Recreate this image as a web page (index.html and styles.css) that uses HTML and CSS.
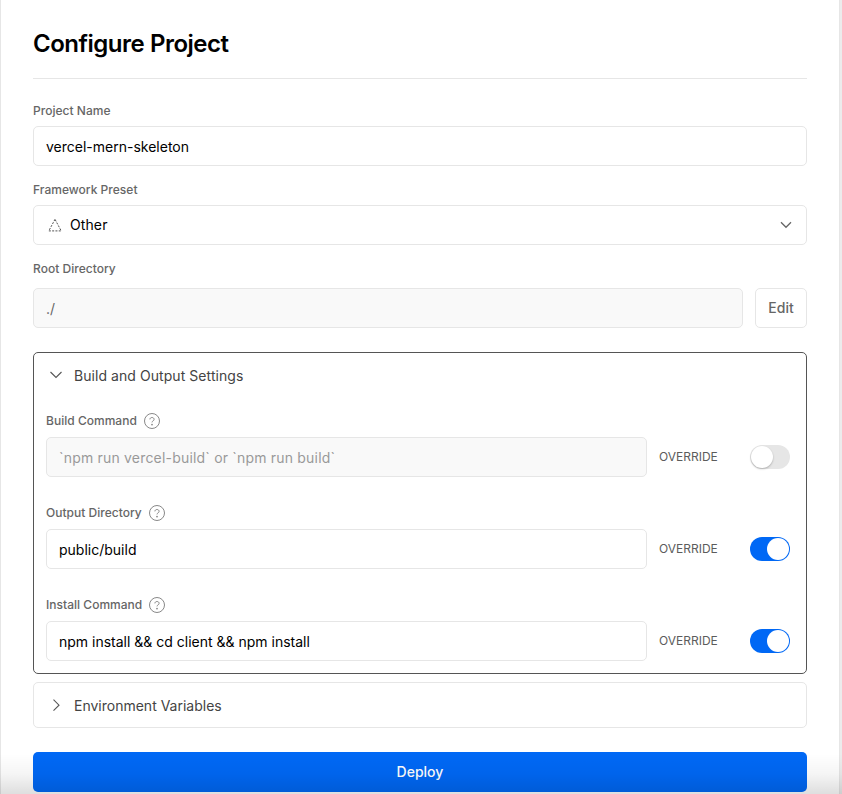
FILE: index.html
```html
<!DOCTYPE html>
<html lang="en">
<head>
<meta charset="utf-8">
<title>Configure Project</title>
<link rel="stylesheet" href="styles.css">
</head>
<body>
<main class="card">
  <h1 class="title">Configure Project</h1>
  <section class="field">
    <div class="label">Project Name</div>
    <div class="input">vercel-mern-skeleton</div>
  </section>
  <section class="field">
    <div class="label">Framework Preset</div>
    <div class="input select">
      <svg class="preset" width="14" height="14" viewBox="0 0 14 14"><path d="M7 1.300.8 12.900h12.400Z" fill="none" stroke="#555" stroke-width="1" stroke-dasharray="2 1.300"/></svg>
      <span class="select-text">Other</span>
      <svg class="caret" width="12" height="8" viewBox="0 0 12 8"><path d="m1 1.300 5 5 5-5" fill="none" stroke="#666" stroke-width="1.300"/></svg>
    </div>
  </section>
  <section class="field root">
    <div class="label">Root Directory</div>
    <div class="row">
      <div class="input disabled path">./</div>
      <button class="edit">Edit</button>
    </div>
  </section>
  <section class="panel open">
    <div class="panel-head">
      <svg width="14" height="14" viewBox="0 0 14 14"><path d="m1.500 4 5.500 5.500L12.500 4" fill="none" stroke="#555" stroke-width="1.100"/></svg>
      <span class="build-title">Build and Output Settings</span>
    </div>
    <div class="setting">
      <div class="label">Build Command <svg class="help" width="16" height="16" viewBox="0 0 16 16"><circle cx="8" cy="8" r="7.500"/><path d="M5.900 6.400C5.900 5.200 6.800 4.500 8 4.500s2.100.8 2.100 1.900c0 1.500-2.100 1.500-2.100 3"/><circle class="dot" cx="8" cy="11.600" r=".9"/></svg></div>
      <div class="row">
        <div class="input disabled hint">`npm run vercel-build` or `npm run build`</div>
        <span class="override">OVERRIDE</span>
        <span class="toggle"></span>
      </div>
    </div>
    <div class="setting">
      <div class="label">Output Directory <svg class="help" width="16" height="16" viewBox="0 0 16 16"><circle cx="8" cy="8" r="7.500"/><path d="M5.900 6.400C5.900 5.200 6.800 4.500 8 4.500s2.100.8 2.100 1.900c0 1.500-2.100 1.500-2.100 3"/><circle class="dot" cx="8" cy="11.600" r=".9"/></svg></div>
      <div class="row">
        <div class="input">public/build</div>
        <span class="override">OVERRIDE</span>
        <span class="toggle on"></span>
      </div>
    </div>
    <div class="setting">
      <div class="label">Install Command <svg class="help" width="16" height="16" viewBox="0 0 16 16"><circle cx="8" cy="8" r="7.500"/><path d="M5.900 6.400C5.900 5.200 6.800 4.500 8 4.500s2.100.8 2.100 1.900c0 1.500-2.100 1.500-2.100 3"/><circle class="dot" cx="8" cy="11.600" r=".9"/></svg></div>
      <div class="row">
        <div class="input">npm install &amp;&amp; cd client &amp;&amp; npm install</div>
        <span class="override">OVERRIDE</span>
        <span class="toggle on"></span>
      </div>
    </div>
  </section>
  <section class="panel">
    <div class="panel-head">
      <svg width="14" height="14" viewBox="0 0 14 14"><path d="m4.500 1.700 5.500 5.500-5.500 5.500" fill="none" stroke="#555" stroke-width="1.100"/></svg>
      <span>Environment Variables</span>
    </div>
  </section>
  <button class="deploy">Deploy</button>
</main>
<div class="fade"></div>
</body>
</html>
```
FILE: styles.css
```css
* { box-sizing: border-box; }
body {
  margin: 0;
  height: 794px;
  overflow: hidden;
  background: #ececec;
  font-family: Inter, "Liberation Sans", sans-serif;
  font-size: 14px;
  color: #000;
}
.card {
  width: 840px;
  height: 794px;
  padding: 0 32px;
  background: #fff;
  border: solid #e6e6e6;
  border-width: 0 1px;
}
.title {
  margin: 0 0 23px;
  height: 79px;
  padding-top: 28px;
  border-bottom: 1px solid #e6e6e6;
  font-size: 24px;
  line-height: 32px;
  font-weight: 600;
  letter-spacing: -0.48px;
}
.field { margin-bottom: 15px; }
.label {
  display: flex;
  align-items: center;
  height: 16px;
  margin-bottom: 8px;
  font-size: 12px;
  font-weight: 500;
  letter-spacing: 0.02px;
  color: #666;
}
.input {
  display: flex;
  align-items: center;
  height: 40px;
  padding: 0 12px;
  border: 1px solid #e6e6e6;
  border-radius: 5px;
  background: #fff;
  white-space: pre;
}
.select { padding: 0 14px; }
.select-text { flex: 1; margin-left: 8px; padding-bottom: 2px; letter-spacing: 0.1px; }
.disabled { background: #f9f9f9; color: #666; }
.root { margin-bottom: 24px; }
.root .label { margin-bottom: 12px; }
.row { display: flex; align-items: center; }
.row .input { flex: 1; }
.edit {
  width: 52px;
  height: 40px;
  margin-left: 12px;
  padding: 0 0 2px;
  border: 1px solid #e6e6e6;
  border-radius: 5px;
  background: #fff;
  color: #666;
  font: 500 14px Inter, sans-serif;
}
.panel {
  height: 46px;
  border: 1px solid #e6e6e6;
  border-radius: 5px;
  padding: 0 12px;
}
.open { height: 322px; margin-bottom: 8px; border-color: #555; }
.panel-head {
  display: flex;
  align-items: center;
  gap: 11px;
  height: 46px;
  padding: 0 0 2px 3px;
  color: #444;
}
.build-title { letter-spacing: 0.06px; }
.panel-head svg { margin-bottom: 1px; }
.setting { padding-top: 13px; margin-bottom: 14px; }
.setting .label { height: 16px; margin-bottom: 9px; }
.help { position: relative; top: 1px; margin-left: 7px; fill: none; stroke: #888; stroke-width: 1; }
.help .dot { fill: #888; stroke: none; }
.hint { color: #999; letter-spacing: 0.19px; }
.override {
  width: 59px;
  margin: 0 32px 0 12px;
  padding-bottom: 2px;
  font-size: 12px;
  color: #5c5c5c;
}
.toggle {
  display: flex;
  width: 40px;
  height: 24px;
  margin-right: 4px;
  padding: 1px;
  border-radius: 12px;
  background: #e6e6e6;
}
.toggle::before {
  content: "";
  width: 22px;
  height: 22px;
  border-radius: 50%;
  background: #fff;
  box-shadow: 0 1px 2px rgba(0, 0, 0, 0.25);
}
.on { justify-content: flex-end; background: #0068f5; }
.on::before { box-shadow: none; }
.deploy {
  display: block;
  width: 100%;
  height: 40px;
  margin-top: 24px;
  padding: 0 0 2px;
  border: 0;
  border-radius: 5px;
  background: #0068f5;
  color: #fff;
  font: 500 14px Inter, sans-serif;
}
.fade {
  position: absolute;
  left: 0;
  bottom: 0;
  width: 842px;
  height: 40px;
  background: linear-gradient(rgba(0, 0, 0, 0), rgba(0, 0, 0, 0.04) 50%, rgba(0, 0, 0, 0.13));
}
```
